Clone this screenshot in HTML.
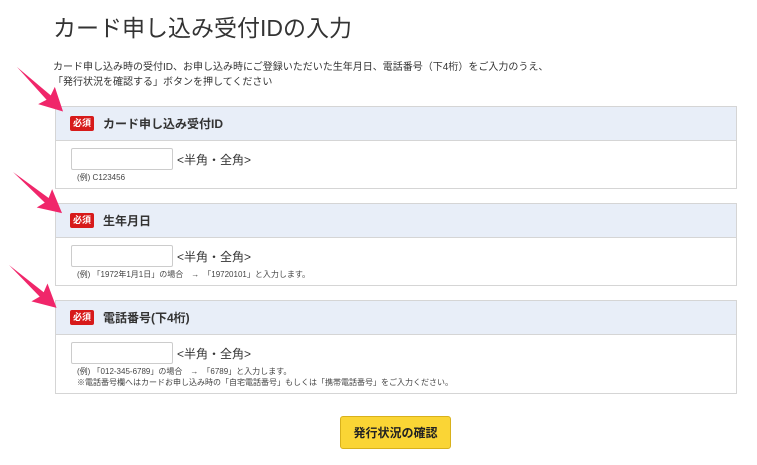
<!DOCTYPE html>
<html><head><meta charset="utf-8"><style>
*{margin:0;padding:0;box-sizing:border-box}
body{width:757px;height:465px;background:#fff;font-family:"Liberation Sans","Noto Sans CJK JP",sans-serif;color:#333;position:relative;overflow:hidden}
h1{position:absolute;left:53px;top:9px;font-size:23px;font-weight:normal;color:#333}
.lead{position:absolute;left:53px;top:60px;font-size:10px;line-height:15px;color:#333}
.box{position:absolute;left:55px;width:682px;border:1px solid #d5d5d5;background:#fff}
.hd{height:34px;background:#e8eef8;border-bottom:1px solid #d5d5d5;display:flex;align-items:center;padding-left:14px;font-weight:bold;font-size:12px}
.req{background:#d71a1a;color:#fff;font-size:9px;font-weight:bold;padding:2px 3px;border-radius:2px;margin-right:9px;line-height:11px}
.bd{padding:7px 0 0 15px}
.in{display:inline-block;width:102px;height:22px;border:1px solid #ccc;border-radius:2px;vertical-align:middle}
.lab{font-size:12px;vertical-align:middle;margin-left:4px}
.ex{font-size:8px;color:#444;margin:2px 0 0 6px;line-height:11px}
.btn{position:absolute;left:340px;top:416px;width:111px;height:33px;background:#fad535;border:1px solid #d8b11c;border-radius:3px;font-size:12px;font-weight:bold;display:flex;align-items:center;justify-content:center;color:#222}
svg{position:absolute;left:0;top:0}
</style></head><body>
<h1>カード申し込み受付IDの入力</h1>
<div class="lead">カード申し込み時の受付ID、お申し込み時にご登録いただいた生年月日、電話番号（下4桁）をご入力のうえ、<br>「発行状況を確認する」ボタンを押してください</div>
<div class="box" style="top:106px;height:83px"><div class="hd"><span class="req">必須</span>カード申し込み受付ID</div>
<div class="bd"><span class="in"></span><span class="lab">&lt;半角・全角&gt;</span><div class="ex">(例) C123456</div></div></div>
<div class="box" style="top:203px;height:83px"><div class="hd"><span class="req">必須</span>生年月日</div>
<div class="bd"><span class="in"></span><span class="lab">&lt;半角・全角&gt;</span><div class="ex">(例) 「1972年1月1日」の場合　→　「19720101」と入力します。</div></div></div>
<div class="box" style="top:300px;height:94px"><div class="hd"><span class="req">必須</span>電話番号(下4桁)</div>
<div class="bd"><span class="in"></span><span class="lab">&lt;半角・全角&gt;</span><div class="ex">(例) 「012-345-6789」の場合　→　「6789」と入力します。<br>※電話番号欄へはカードお申し込み時の「自宅電話番号」もしくは「携帯電話番号」をご入力ください。</div></div></div>
<div class="btn">発行状況の確認</div>
<svg width="757" height="465">
<defs><polygon id="ar" points="0,0 44,-3 41,-12 64,0 41,12 44,3" fill="#f0266a"/></defs>
<use href="#ar" transform="translate(17,67) rotate(44)"/>
<use href="#ar" transform="translate(13,172) rotate(40)"/>
<use href="#ar" transform="translate(9,265) rotate(42)"/>
</svg>
</body></html>
